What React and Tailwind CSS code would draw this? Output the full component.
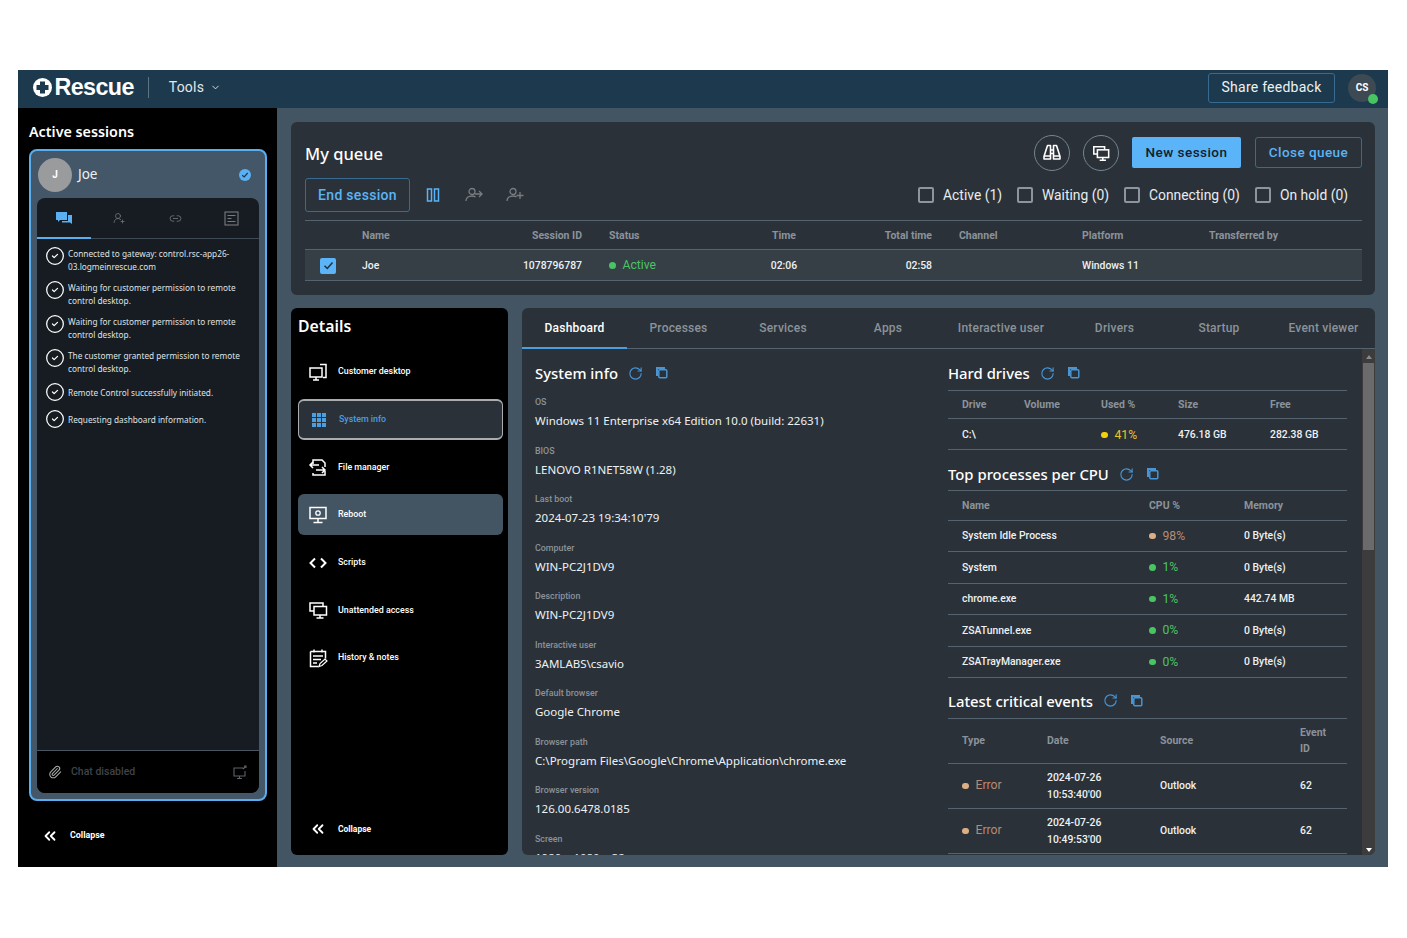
import React from 'react';
import { ChevronDown, ChevronsLeft, CircleCheck, Link2, Paperclip, RotateCw, UserRoundPlus } from 'lucide-react';

const ROBOTO = "font-['Roboto',sans-serif]";
const NOTO = "font-['Noto_Sans',sans-serif]";

const logLines = [
    ['Connected to gateway: control.rsc-app26-', '03.logmeinrescue.com'],
    ['Waiting for customer permission to remote', 'control desktop.'],
    ['Waiting for customer permission to remote', 'control desktop.'],
    ['The customer granted permission to remote', 'control desktop.'],
    ['Remote Control successfully initiated.'],
    ['Requesting dashboard information.'],
];

const sysFields = [
    ['OS', 'Windows 11 Enterprise x64 Edition 10.0 (build: 22631)'],
    ['BIOS', 'LENOVO R1NET58W (1.28)'],
    ['Last boot', "2024-07-23 19:34:10'79"],
    ['Computer', 'WIN-PC2J1DV9'],
    ['Description', 'WIN-PC2J1DV9'],
    ['Interactive user', '3AMLABS\\csavio'],
    ['Default browser', 'Google Chrome'],
    ['Browser path', 'C:\\Program Files\\Google\\Chrome\\Application\\chrome.exe'],
    ['Browser version', '126.00.6478.0185'],
    ['Screen', '1920 x 1080 x 32'],
];

const processes = [
    ['System Idle Process', '98%', 'orange', '0 Byte(s)'],
    ['System', '1%', 'green', '0 Byte(s)'],
    ['chrome.exe', '1%', 'green', '442.74 MB'],
    ['ZSATunnel.exe', '0%', 'green', '0 Byte(s)'],
    ['ZSATrayManager.exe', '0%', 'green', '0 Byte(s)'],
];

const events = [
    ['2024-07-26', "10:53:40'00"],
    ['2024-07-26', "10:49:53'00"],
];

const tabs = [
    ['Dashboard', 'w-[105px]'],
    ['Processes', 'w-[103px]'],
    ['Services', 'w-[106px]'],
    ['Apps', 'w-[104px]'],
    ['Interactive user', 'w-[122px]'],
    ['Drivers', 'w-[105px]'],
    ['Startup', 'w-[104px]'],
    ['Event viewer', 'w-[105px]'],
];

const Glyph = ({ children }) => (
    <svg width="20" height="20" viewBox="0 0 20 20" fill="none" stroke="currentColor" strokeWidth="1.5">
        {children}
    </svg>
);

const menuItems = [
    {
        label: 'Customer desktop',
        icon: (
            <Glyph>
                <path d="M12 2.500h6v13h-3" />
                <rect x="2" y="6" width="12" height="9" />
                <path d="M8 15v2.500M5 18h6" />
            </Glyph>
        ),
    },
    {
        label: 'System info',
        active: true,
        icon: (
            <svg width="20" height="20" viewBox="0 0 20 20" fill="#4a9fe0">
                {[3, 8, 13].map((y) => [3, 8, 13].map((x) => <rect key={`${x}-${y}`} x={x} y={y} width="4" height="4" />))}
            </svg>
        ),
    },
    {
        label: 'File manager',
        icon: (
            <Glyph>
                <path d="M5 7V3h9l3 3v4M17 14v4H5v-2" />
                <path d="M11 8H2M5 5L2 8l3 3M8 13h9M14 10l3 3-3 3" />
            </Glyph>
        ),
    },
    {
        label: 'Reboot',
        hover: true,
        icon: (
            <Glyph>
                <rect x="2" y="2.500" width="16" height="11" />
                <path d="M10 13.500V17M5.500 17.500h9" />
                <circle cx="10" cy="8" r="2.200" strokeWidth="1.300" />
            </Glyph>
        ),
    },
    {
        label: 'Scripts',
        icon: (
            <Glyph>
                <path d="M7 5.500L2.500 10 7 14.500M13 5.500l4.500 4.500-4.500 4.500" strokeWidth="2" />
            </Glyph>
        ),
    },
    {
        label: 'Unattended access',
        icon: (
            <Glyph>
                <path d="M6 11H2V3h13v3" />
                <rect x="6" y="6.500" width="12.500" height="8.500" />
                <path d="M12 15v2.500M8.500 18h7" />
            </Glyph>
        ),
    },
    {
        label: 'History & notes',
        icon: (
            <Glyph>
                <path d="M6 1.500v3M14 1.500v3M2.500 3.500h15v7M2.500 3.500v15h8" />
                <path d="M5 8h10M5 11.500h8M5 15h4" />
                <path d="M11 18.500l1-3 5-4.500 2 2-5 4.500z" strokeWidth="1.200" />
            </Glyph>
        ),
    },
];

const dotStyles = {
    green: ['bg-[#49c463]', 'text-[#49c463]'],
    orange: ['bg-[#dcae86]', 'text-[#b98a74]'],
    yellow: ['bg-[#f2d20c]', 'text-[#e6c52a]'],
};

const Status = ({ color, children }) => (
    <span className={`flex items-center gap-[7px] text-[12.2px] font-normal ${dotStyles[color][1]}`}>
        <span className={`w-[6.5px] h-[6.5px] rounded-full ${dotStyles[color][0]}`} />
        {children}
    </span>
);

const SectionTitle = ({ children }) => (
    <div className="flex items-center gap-[10px]">
        <h3 className={`${NOTO} text-[14.85px] font-medium text-white leading-[22px] whitespace-nowrap`}>{children}</h3>
        <RotateCw size={15} strokeWidth={1.8} className="text-[#4a94d2]" />
        <svg className="ml-[3px]" width="12" height="12" viewBox="0 0 12 12" fill="none" stroke="#4a94d2" strokeWidth="1.500">
            <path d="M1 9V1h8" strokeWidth="2" />
            <rect x="2.800" y="2.800" width="8" height="8" rx="1" />
        </svg>
    </div>
);

const Checkbox = ({ label, className = '' }) => (
    <label className={`flex items-center gap-[9px] text-[13.85px] text-[#e8ecef] whitespace-nowrap ${className}`}>
        <span className="w-[16px] h-[16px] border-2 border-[#8d969e] rounded-[2px]" />
        {label}
    </label>
);

const headCell = 'text-[10.5px] font-bold text-[#8a939b]';
const bodyCell = 'text-[10.4px] font-medium text-[#eef1f3]';

const Header = () => (
    <header className={`h-[38px] shrink-0 flex items-center pb-[3px] bg-[#1c394d] text-white ${ROBOTO}`}>
        <div className="flex items-center pl-[15px] gap-[2.5px]">
            <svg width="19" height="19" viewBox="0 0 19 19">
                <circle cx="9.500" cy="9.500" r="9.500" fill="#fff" />
                <path d="M7 3.500h5V7h3.500v5H12v3.500H7V12H3.500V7H7z" fill="#1c394d" />
            </svg>
            <span className="font-['Liberation_Sans',sans-serif] text-[23.3px] font-bold tracking-[-0.6px]">Rescue</span>
        </div>
        <span className="w-px h-[21px] bg-[#5c7484] ml-[14px]" />
        <button className="flex items-center ml-[20px] gap-[6px] text-[14px] text-[#e4e8eb] tracking-[0.2px]">
            Tools <ChevronDown size={11} strokeWidth={2} />
        </button>
        <button className="ml-auto w-[127px] h-[30px] border border-[#376b8f] rounded-[3px] text-[14px] tracking-[0.25px] text-[#eef1f3]">
            Share feedback
        </button>
        <div className="relative w-[28px] h-[28px] rounded-full bg-[#3d4a54] ml-[13px] mr-[12px] flex items-center justify-center text-[10px] font-bold">
            CS
            <span className="absolute right-[-2px] bottom-[-2px] w-[10px] h-[10px] rounded-full bg-[#49c463]" />
        </div>
    </header>
);

const SessionsPanel = () => (
    <aside className={`w-[259px] shrink-0 bg-black flex flex-col px-[11px] ${NOTO}`}>
        <h2 className="text-[14.3px] font-semibold text-white mt-[14px] leading-[20px]">Active sessions</h2>
        <div className="mt-[7px] w-[238px] h-[652px] border-2 border-[#58aeef] rounded-[8px] bg-[#435768] flex flex-col px-[6px] pb-[6px]">
            <div className="h-[47px] shrink-0 flex items-center">
                <span className={`w-[34px] h-[34px] ml-[1px] rounded-full bg-[#9a9b9c] flex items-center justify-center text-white text-[10px] font-bold ${ROBOTO}`}>J</span>
                <span className="ml-[6px] text-[13.5px] text-[#eef1f3]">Joe</span>
                <span className="ml-auto mr-[8px] w-[12px] h-[12px] rounded-full bg-[#5ab0f2] flex items-center justify-center">
                    <svg width="8" height="8" viewBox="0 0 8 8" fill="none" stroke="#1f3a50" strokeWidth="1.200"><path d="M1.200 4.200l2 1.800 3.500-4" /></svg>
                </span>
            </div>
            <div className="flex-1 rounded-[8px] overflow-hidden bg-[#171c22] flex flex-col">
                <div className="h-[41px] shrink-0 flex border-b border-[#3d4a54]">
                    <div className="w-[54px] flex items-center justify-center border-b-2 border-[#58aeef] -mb-px">
                        <svg width="16" height="14" viewBox="0 0 16 14" fill="#5ab0f2">
                            <path d="M0 1h11v8H4l-2 2V9H0z" />
                            <path d="M12 4h4v9l-2-1.500H6V10h6z" />
                        </svg>
                    </div>
                    <div className="w-[56px] flex items-center justify-center text-[#77797b]"><UserRoundPlus size={12} strokeWidth={1.5} /></div>
                    <div className="w-[56px] flex items-center justify-center text-[#77797b]"><Link2 size={13} strokeWidth={1.5} /></div>
                    <div className="w-[56px] flex items-center justify-center text-[#77797b]">
                        <svg width="15" height="15" viewBox="0 0 15 15" fill="none" stroke="currentColor" strokeWidth="1.100">
                            <rect x="1" y="1" width="13" height="13" />
                            <path d="M3.500 4.500h8M3.500 7.500h4M3.500 10.500h8" />
                        </svg>
                    </div>
                </div>
                <ul className="flex-1 pt-[8.5px] pl-[7.5px] pr-[6px] flex flex-col gap-[9px]">
                    {logLines.map((lines, i) => (
                        <li key={i} className="flex gap-[3.5px] items-start min-h-[18px] text-[8.25px] leading-[13px] text-[#dfe3e6]">
                            <CircleCheck size={20} strokeWidth={1.5} className="text-white shrink-0 -mt-[2px] -mb-[2px]" />
                            <div className={lines.length === 1 ? 'pt-[2px]' : '-mt-[1px]'}>
                                {lines.map((l) => <p key={l} className="whitespace-nowrap">{l}</p>)}
                            </div>
                        </li>
                    ))}
                </ul>
                <div className={`h-[43px] shrink-0 bg-black border-t border-[#4a5560] flex items-center px-[11px] ${ROBOTO}`}>
                    <Paperclip size={14} strokeWidth={1.8} className="text-[#a8acaf]" />
                    <span className="ml-[9px] text-[10.5px] font-medium text-[#3e444a]">Chat disabled</span>
                    <svg className="ml-auto text-[#5e6367]" width="15" height="15" viewBox="0 0 15 15" fill="none" stroke="currentColor" strokeWidth="1.100">
                        <path d="M10 3H1v8h11V6M6.500 11v2.500M4 13.500h5M10 4l3-3M11 1h2v2" />
                    </svg>
                </div>
            </div>
        </div>
        <button className={`mt-[26px] ml-[12px] flex items-center gap-[11px] text-[8.9px] font-bold text-white ${ROBOTO}`}>
            <ChevronsLeft size={18} strokeWidth={2.4} /> Collapse
        </button>
    </aside>
);

const queueCols = 'grid grid-cols-[57px_120px_100px_178px_48px_124px_150px_127px_153px] items-center';

const QueuePanel = () => (
    <section className={`h-[173px] shrink-0 bg-[#2b3138] rounded-[6px] pl-[14px] pr-[13px] ${ROBOTO}`}>
        <div className="h-[56px] flex items-end">
            <h2 className={`${NOTO} text-[16.5px] font-medium text-white mb-[11px]`}>My queue</h2>
            <div className="ml-auto flex items-center mb-[7px]">
                <span className="w-[36px] h-[36px] rounded-full border border-[#76858f] flex items-center justify-center text-white">
                    <svg width="20" height="20" viewBox="0 0 20 20" fill="none" stroke="currentColor" strokeWidth="1.600" strokeLinejoin="round">
                        <path d="M5.500 2.500h3V16H2v-2.500z" />
                        <path d="M14.500 2.500h-3V16H18v-2.500z" />
                        <path d="M8.500 7h3M8.500 10.500h3M2 13h6.500M11.500 13H18" />
                    </svg>
                </span>
                <span className="ml-[13px] w-[36px] h-[36px] rounded-full border border-[#76858f] flex items-center justify-center text-white">
                    <svg width="18" height="18" viewBox="0 0 20 20" fill="none" stroke="currentColor" strokeWidth="1.700">
                        <path d="M6 11H2V3h12v3" />
                        <rect x="6" y="6.500" width="12.500" height="8.500" />
                        <path d="M12 15v2.500M8.500 18h7" />
                    </svg>
                </span>
                <button className="ml-[13px] mb-[2px] w-[109px] h-[31px] bg-[#5ab4f7] rounded-[2px] text-[13.5px] font-medium tracking-[0.45px] text-[#14202c]">New session</button>
                <button className="ml-[14px] mb-[2px] w-[107px] h-[31px] border border-[#376b8f] rounded-[3px] text-[13.5px] font-medium tracking-[0.45px] text-[#5ab4f7]">Close queue</button>
            </div>
        </div>
        <div className="h-[34px] flex items-center">
            <button className="w-[105px] h-[34px] border border-[#376b8f] rounded-[3px] text-[14px] font-medium tracking-[0.3px] text-[#5ab4f7]">End session</button>
            <svg className="ml-[16px]" width="14" height="14" viewBox="0 0 14 14" fill="none" stroke="#5ab4f7" strokeWidth="1.500">
                <rect x="1.500" y="1" width="4" height="12" />
                <rect x="8.500" y="1" width="4" height="12" />
            </svg>
            <svg className="ml-[25px]" width="19" height="16" viewBox="0 0 19 16" fill="none" stroke="#787c80" strokeWidth="1.300">
                <circle cx="7" cy="4.500" r="3" />
                <path d="M1 14c0-3 2.500-5 6-5 1.500 0 2.500 .3 3.500 1M10 7h7M14 4l3 3-3 3" />
            </svg>
            <svg className="ml-[22px]" width="18" height="16" viewBox="0 0 18 16" fill="none" stroke="#787c80" strokeWidth="1.300">
                <circle cx="7" cy="4.500" r="3" />
                <path d="M1 14c0-3 2.500-5 6-5 1.500 0 2.500 .3 3.500 1M14 5v7M10.500 8.500h7" />
            </svg>
            <div className="ml-auto flex items-center pr-[14px]">
                <Checkbox label="Active (1)" />
                <Checkbox label="Waiting (0)" className="ml-[15px]" />
                <Checkbox label="Connecting (0)" className="ml-[15px]" />
                <Checkbox label="On hold (0)" className="ml-[15px]" />
            </div>
        </div>
        <div className={`mt-[8px] h-[29px] pt-[2px] border-t border-[#55636e] ${queueCols} ${headCell}`}>
            <span />
            <span>Name</span>
            <span className="text-right">Session ID</span>
            <span className="pl-[27px]">Status</span>
            <span className="text-center">Time</span>
            <span className="text-right">Total time</span>
            <span className="pl-[27px]">Channel</span>
            <span>Platform</span>
            <span>Transferred by</span>
        </div>
        <div className={`h-[32px] pt-[1px] bg-[#363f46] border-y border-[#55636e] ${queueCols} ${bodyCell}`}>
            <span className="pl-[15px]">
                <span className="w-[16px] h-[16px] rounded-[2px] bg-[#5ab4f7] flex items-center justify-center">
                    <svg width="11" height="11" viewBox="0 0 11 11" fill="none" stroke="#22303c" strokeWidth="1.500"><path d="M1.500 5.800l2.800 2.700 5.200-6" /></svg>
                </span>
            </span>
            <span>Joe</span>
            <span className="text-right">1078796787</span>
            <span className="pl-[27px]"><Status color="green">Active</Status></span>
            <span className="text-center">02:06</span>
            <span className="text-right">02:58</span>
            <span />
            <span>Windows 11</span>
            <span />
        </div>
    </section>
);

const DetailsPanel = () => (
    <nav className={`w-[217px] shrink-0 bg-black rounded-[6px] flex flex-col px-[7px] ${ROBOTO}`}>
        <h2 className={`${NOTO} text-[15.8px] font-semibold text-white mt-[6px] leading-[24px]`}>Details</h2>
        <ul className="mt-[13.5px] flex flex-col gap-[6.67px]">
            {menuItems.map((item) => (
                <li
                    key={item.label}
                    className={`h-[41px] w-[205px] flex items-center pl-[10px] rounded-[6px] text-[8.85px] font-medium ${
                        item.active
                            ? 'bg-[#2b3138] border-y-2 border-x border-[#a9adb0] text-[#4a9fe0]'
                            : item.hover
                            ? 'bg-[#435563] text-white'
                            : 'text-white'
                    }`}
                >
                    <span className={item.active ? 'text-[#4a9fe0]' : 'text-white'}>{item.icon}</span>
                    <span className="ml-[10px]">{item.label}</span>
                </li>
            ))}
        </ul>
        <button className="mt-auto mb-[17px] ml-[11px] flex items-center gap-[11px] text-[8.5px] font-bold text-white">
            <ChevronsLeft size={18} strokeWidth={2.4} /> Collapse
        </button>
    </nav>
);

const SysInfo = () => (
    <div className="w-[426px] shrink-0 pl-[13px]">
        <SectionTitle>System info</SectionTitle>
        <dl className="mt-[11px]">
            {sysFields.map(([label, value]) => (
                <div key={label} className="h-[48.5px]">
                    <dt className="text-[8.9px] font-medium text-[#8a939b] leading-[15px]">{label}</dt>
                    <dd className={`${NOTO} mt-[2px] text-[11.5px] text-[#eef1f3] leading-[18px] whitespace-nowrap`}>{value}</dd>
                </div>
            ))}
        </dl>
    </div>
);

const Dashboard = () => (
    <div className="flex-1 min-w-0 pr-[15px]">
        <SectionTitle>Hard drives</SectionTitle>
        <div className={`mt-[6px] h-[29px] border-y border-[#55636e] grid grid-cols-[62px_77px_77px_92px_1fr] pl-[14px] items-center ${headCell}`}>
            <span>Drive</span>
            <span>Volume</span>
            <span>Used %</span>
            <span>Size</span>
            <span>Free</span>
        </div>
        <div className={`h-[31px] pt-[2px] border-b border-[#55636e] grid grid-cols-[62px_77px_77px_92px_1fr] pl-[14px] items-center ${bodyCell}`}>
            <span>C:\</span>
            <span />
            <Status color="yellow">41%</Status>
            <span>476.18 GB</span>
            <span>282.38 GB</span>
        </div>

        <div className="mt-[13px]"><SectionTitle>Top processes per CPU</SectionTitle></div>
        <div className={`mt-[5px] h-[31px] border-y border-[#55636e] grid grid-cols-[187px_95px_1fr] pl-[14px] items-center ${headCell}`}>
            <span>Name</span>
            <span>CPU %</span>
            <span>Memory</span>
        </div>
        {processes.map(([name, cpu, color, mem]) => (
            <div key={name} className={`h-[31.4px] border-b border-[#55636e] grid grid-cols-[187px_95px_1fr] pl-[14px] items-center ${bodyCell}`}>
                <span>{name}</span>
                <Status color={color}>{cpu}</Status>
                <span>{mem}</span>
            </div>
        ))}

        <div className="mt-[12px]"><SectionTitle>Latest critical events</SectionTitle></div>
        <div className={`mt-[6px] h-[46px] border-y border-[#55636e] grid grid-cols-[85px_113px_140px_1fr] pl-[14px] items-center leading-[16px] ${headCell}`}>
            <span>Type</span>
            <span>Date</span>
            <span>Source</span>
            <span>Event<br />ID</span>
        </div>
        {events.map(([d, t]) => (
            <div key={t} className={`h-[45px] border-b border-[#55636e] grid grid-cols-[85px_113px_140px_1fr] pl-[14px] items-center leading-[17px] ${bodyCell}`}>
                <Status color="orange">Error</Status>
                <span>{d}<br />{t}</span>
                <span>Outlook</span>
                <span>62</span>
            </div>
        ))}
    </div>
);

const Scrollbar = () => (
    <div className="w-[13px] shrink-0 bg-[#3c3c3c] flex flex-col items-center">
        <span className="mt-[6px] w-0 h-0 border-x-[3px] border-x-transparent border-b-[4px] border-b-[#8a8a8a]" />
        <span className="mt-[4px] w-[11px] h-[187px] bg-[#6b6b6b]" />
        <span className="mt-auto mb-[3px] w-0 h-0 border-x-[3px] border-x-transparent border-t-[4px] border-t-white" />
    </div>
);

const SystemPanel = () => (
    <section className={`flex-1 min-w-0 bg-[#2b3138] rounded-[6px] flex flex-col overflow-hidden ${ROBOTO}`}>
        <div className="h-[41px] shrink-0 flex border-b border-[#55636e]">
            {tabs.map(([label, w], i) => (
                <div
                    key={label}
                    className={`${w} shrink-0 flex items-center justify-center text-[12px] font-medium tracking-[0.2px] ${
                        i === 0 ? 'text-white font-bold border-b-2 border-[#4a9fe0] -mb-px' : 'text-[#8a939b]'
                    }`}
                >
                    {label}
                </div>
            ))}
        </div>
        <div className="flex-1 min-h-0 flex">
            <div className="flex-1 min-w-0 flex pt-[13px] overflow-hidden">
                <SysInfo />
                <Dashboard />
            </div>
            <Scrollbar />
        </div>
    </section>
);

export default function App() {
    return (
        <div className="w-[1407px] h-[938px] bg-white pt-[70px] pl-[18px] overflow-hidden">
            <div className="w-[1370px] h-[797px] flex flex-col">
                <Header />
                <div className="flex-1 min-h-0 flex bg-[#435563]">
                    <SessionsPanel />
                    <main className="flex-1 min-w-0 pt-[14px] pl-[14px] pr-[13px] pb-[12px] flex flex-col gap-[13px]">
                        <QueuePanel />
                        <div className="flex-1 min-h-0 flex gap-[14px]">
                            <DetailsPanel />
                            <SystemPanel />
                        </div>
                    </main>
                </div>
            </div>
        </div>
    );
}
